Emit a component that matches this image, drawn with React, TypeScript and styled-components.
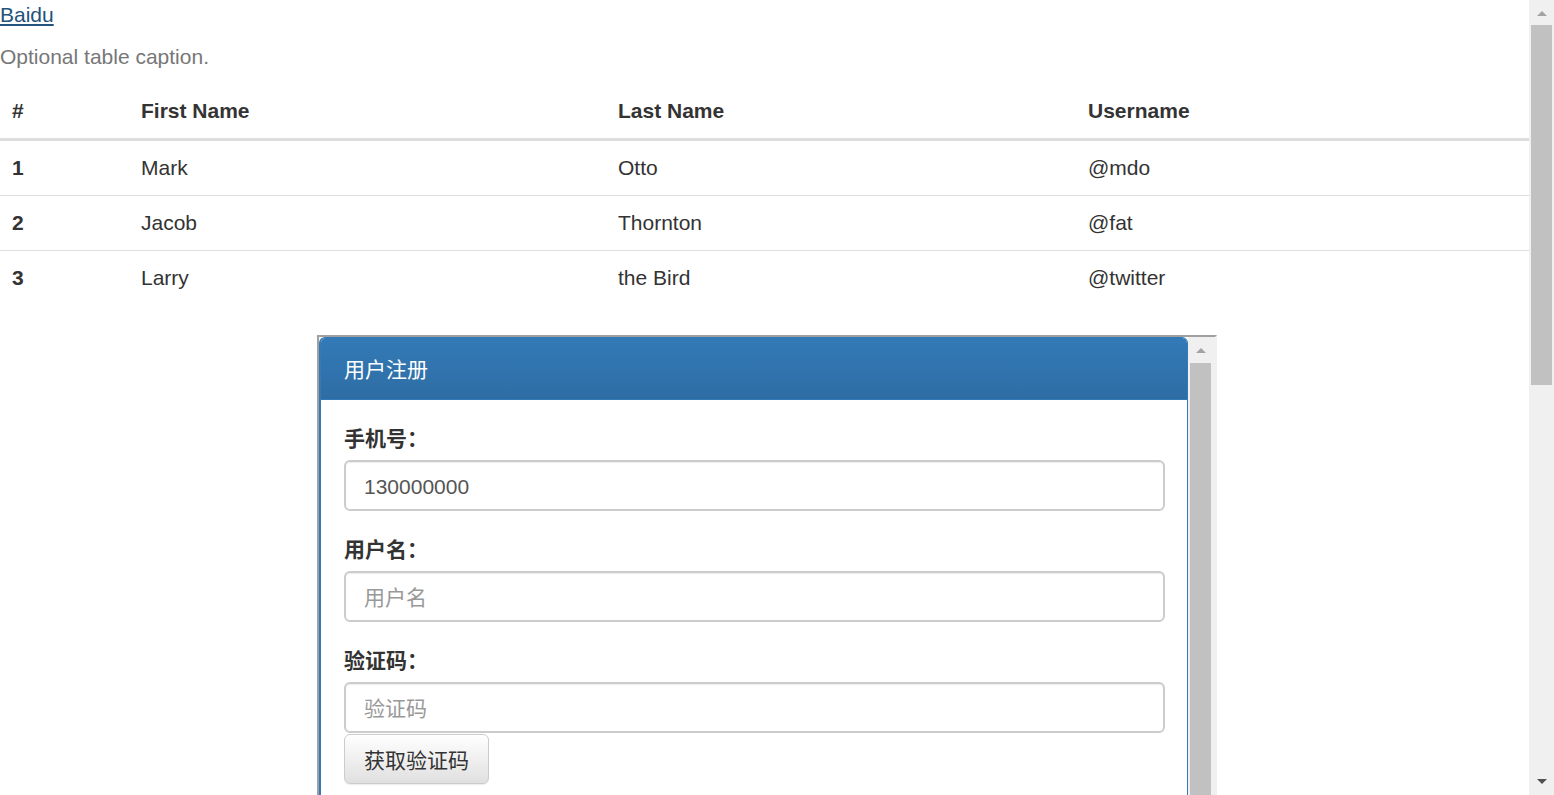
import React from "react";
import styled, { createGlobalStyle } from "styled-components";

const Global = createGlobalStyle`
  html, body { margin: 0; padding: 0; background: #fff; }
  body { font-family: "Liberation Sans", Arial, "Noto Sans CJK SC", sans-serif; }
  * { box-sizing: border-box; }
`;

const Viewport = styled.div`
  display: flex;
  width: 1554px;
  height: 795px;
  overflow: hidden;
`;

const Page = styled.div`
  flex: 1;
  min-width: 0;
  overflow: hidden;
  font-size: 21px;
  line-height: 30px;
  color: #333;
`;

const Link = styled.a`
  color: #23527c;
  text-decoration: underline;
  display: inline-block;
  line-height: 30px;
`;

const Table = styled.table`
  width: 100%;
  border-collapse: collapse;
  margin-bottom: 30px;
`;

const Caption = styled.caption`
  text-align: left;
  color: #777;
  padding: 12px 0;
  line-height: 30px;
`;

const Th = styled.th<{ $w?: number }>`
  text-align: left;
  font-weight: bold;
  padding: 12px;
  line-height: 30px;
  border-bottom: 3px solid #ddd;
  width: ${(p) => (p.$w ? `${p.$w}px` : "auto")};
`;

const Td = styled.td<{ $bold?: boolean }>`
  padding: 12px;
  line-height: 30px;
  border-top: 1px solid #ddd;
  font-weight: ${(p) => (p.$bold ? "bold" : "normal")};
`;

const FrameBox = styled.div`
  margin-left: 317px;
  width: 900px;
  height: 520px;
  border-style: solid;
  border-width: 2px;
  border-color: #a0a0a0 #f0f0f0 #f0f0f0 #a0a0a0;
  display: flex;
  overflow: hidden;
`;

const FrameContent = styled.div`
  flex: 1;
  min-width: 0;
  overflow: hidden;
  font-family: "Liberation Sans", Arial, "Noto Sans CJK SC", sans-serif;
`;

const Panel = styled.div`
  border: 1px solid #337ab7;
  border-left-width: 2px;
  border-radius: 6px 6px 0 0;
  overflow: hidden;
`;

const PanelHeading = styled.div`
  background: linear-gradient(to bottom, #337ab7 0%, #2e6da4 100%);
  border-bottom: 1px solid #337ab7;
  color: #fff;
  padding: 15px 22px 15px 23px;
  font-size: 21px;
  line-height: 31px;
  font-family: "Noto Sans CJK SC", sans-serif;
`;

const PanelBody = styled.div`
  padding: 22px 22px 22px 23px;
`;

const FormGroup = styled.div<{ $last?: boolean }>`
  margin-bottom: ${(p) => (p.$last ? "0" : "22px")};
`;

const Label = styled.label`
  display: block;
  font-weight: bold;
  font-size: 21px;
  line-height: 30px;
  margin-bottom: 8px;
  color: #333;
  font-family: "Noto Sans CJK SC", sans-serif;
`;

const Input = styled.input`
  display: block;
  width: 100%;
  height: 51px;
  padding: 10px 18px 8px;
  font-size: 21px;
  color: #555;
  background: #fff;
  border: 2px solid #ccc;
  border-radius: 6px;
  box-shadow: inset 0 1px 1px rgba(0, 0, 0, 0.075);
  font-family: "Liberation Sans", Arial, "Noto Sans CJK SC", sans-serif;
  outline: none;
  &::placeholder {
    color: #999;
    font-family: "Noto Sans CJK SC", sans-serif;
  }
`;

const Button = styled.button`
  display: inline-block;
  margin-top: 1px;
  height: 50px;
  padding: 0 19px;
  font-size: 21px;
  color: #333;
  background: linear-gradient(to bottom, #fff 0%, #e0e0e0 100%);
  border: 1.5px solid #ccc;
  border-radius: 6px;
  box-shadow: inset 0 1px 0 rgba(255, 255, 255, 0.15), 0 1px 1px rgba(0, 0, 0, 0.075);
  font-family: "Noto Sans CJK SC", sans-serif;
  line-height: 30px;
`;

const ScrollTrack = styled.div<{ $w: number }>`
  width: ${(p) => p.$w}px;
  flex: none;
  background: #f0f0f0;
  position: relative;
`;

const Thumb = styled.div`
  position: absolute;
  background: #c1c1c1;
`;

const Arrow = styled.div<{ $dir: "up" | "down"; $color: string }>`
  position: absolute;
  left: 50%;
  transform: translateX(-50%);
  width: 0;
  height: 0;
  border-left: 5px solid transparent;
  border-right: 5px solid transparent;
  ${(p) =>
    p.$dir === "up"
      ? `border-bottom: 5px solid ${p.$color};`
      : `border-top: 5px solid ${p.$color};`}
`;

const rows = [
  ["1", "Mark", "Otto", "@mdo"],
  ["2", "Jacob", "Thornton", "@fat"],
  ["3", "Larry", "the Bird", "@twitter"],
];

export default function App() {
  return (
    <>
      <Global />
      <Viewport>
        <Page>
          <Link href="#">Baidu</Link>
          <Table>
            <Caption>Optional table caption.</Caption>
            <thead>
              <tr>
                <Th $w={129}>#</Th>
                <Th $w={477}>First Name</Th>
                <Th $w={470}>Last Name</Th>
                <Th>Username</Th>
              </tr>
            </thead>
            <tbody>
              {rows.map((r) => (
                <tr key={r[0]}>
                  <Td $bold>{r[0]}</Td>
                  <Td>{r[1]}</Td>
                  <Td>{r[2]}</Td>
                  <Td>{r[3]}</Td>
                </tr>
              ))}
            </tbody>
          </Table>
          <FrameBox>
            <FrameContent>
              <Panel>
                <PanelHeading>用户注册</PanelHeading>
                <PanelBody>
                  <FormGroup>
                    <Label>手机号：</Label>
                    <Input defaultValue="130000000" />
                  </FormGroup>
                  <FormGroup>
                    <Label>用户名：</Label>
                    <Input placeholder="用户名" />
                  </FormGroup>
                  <FormGroup $last>
                    <Label>验证码：</Label>
                    <Input placeholder="验证码" />
                    <Button>获取验证码</Button>
                  </FormGroup>
                </PanelBody>
              </Panel>
            </FrameContent>
            <ScrollTrack $w={27}>
              <Arrow $dir="up" $color="#a3a3a3" style={{ top: 11, left: 13 }} />
              <Thumb style={{ top: 26, left: 2, width: 21, height: 600 }} />
            </ScrollTrack>
          </FrameBox>
        </Page>
        <ScrollTrack $w={25}>
          <Arrow $dir="up" $color="#a3a3a3" style={{ top: 11 }} />
          <Thumb style={{ top: 25, left: 2, width: 21, height: 360 }} />
          <Arrow $dir="down" $color="#505050" style={{ top: 779 }} />
        </ScrollTrack>
      </Viewport>
    </>
  );
}
